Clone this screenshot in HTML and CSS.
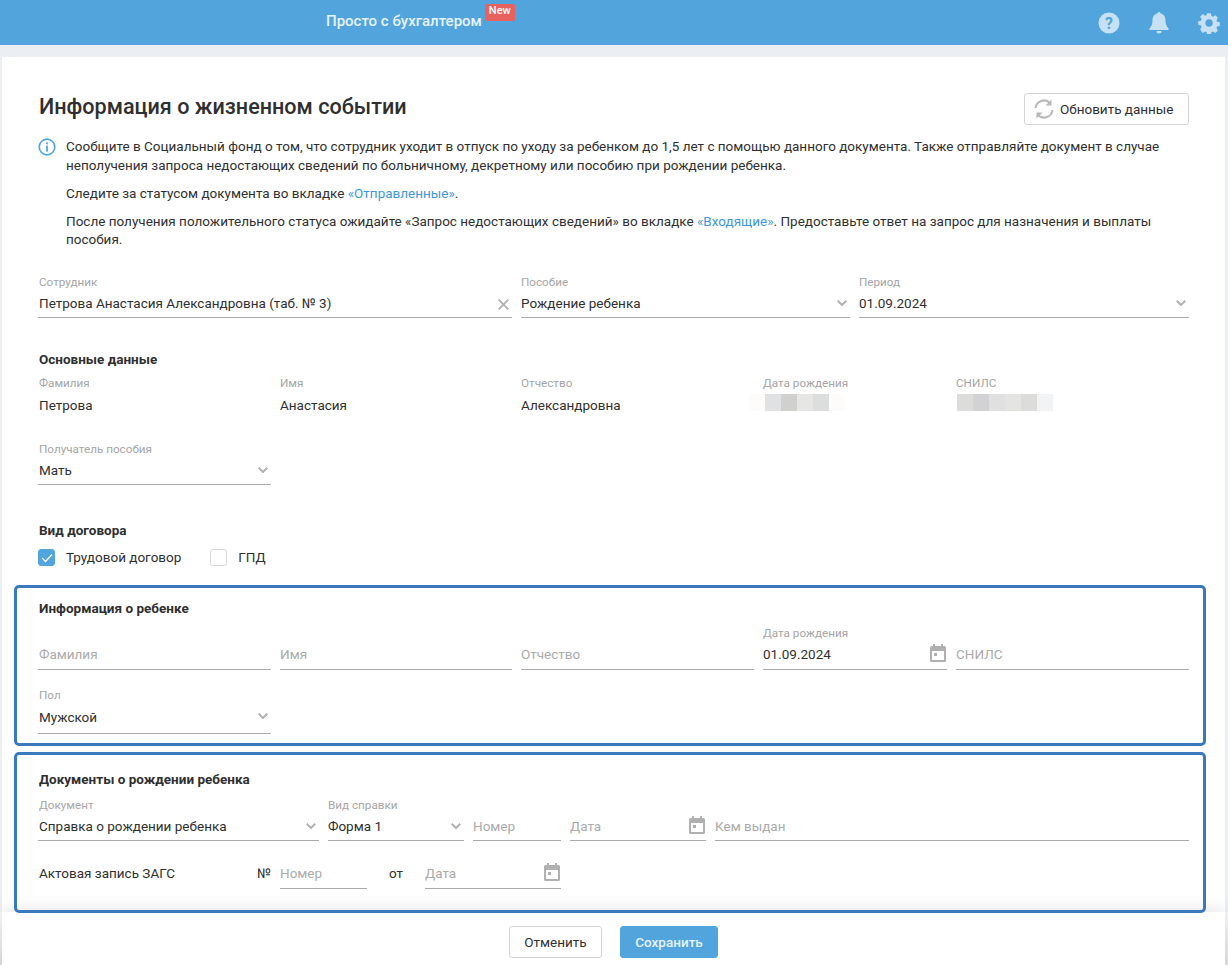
FILE: index.html
```html
<!DOCTYPE html>
<html lang="ru">
<head>
<meta charset="utf-8">
<title>Информация о жизненном событии</title>
<link rel="stylesheet" href="styles.css">
</head>
<body>
<svg class="defs" width="0" height="0" aria-hidden="true">
  <symbol id="cal" viewBox="0 0 16 18"><path fill="#b0b0b0" fill-rule="evenodd" d="M3 0h2v2h6V0h2v2h1.500A1.500 1.500 0 0 1 16 3.500v13a1.500 1.500 0 0 1-1.500 1.500h-13A1.500 1.500 0 0 1 0 16.500v-13A1.500 1.500 0 0 1 1.500 2H3zM2 7v9h12V7zM4 9h3v3H4z"/></symbol>
  <symbol id="chev" viewBox="0 0 10 6"><path fill="none" stroke="#b2b2b2" stroke-width="2" d="M.7.7 5 5l4.300-4.300"/></symbol>
</svg>
<header class="topbar">
  <div class="brand">Просто с бухгалтером<span class="badge">New</span></div>
  <div class="top-icons">
    <svg width="22" height="22" viewBox="0 0 22 22"><circle cx="11" cy="11" r="10.500" fill="#c6e1f5"/><text x="11" y="16.500" text-anchor="middle" class="q">?</text></svg>
    <svg width="20" height="22" viewBox="0 0 20 22"><path fill="#c6e1f5" d="M10 0a1.500 1.500 0 0 1 1.500 1.600C15 2.300 16.500 5 16.500 8.500c0 4 1 5.500 3 8V18H.5v-1.500c2-2.500 3-4 3-8C3.500 5 5 2.300 8.500 1.600A1.500 1.500 0 0 1 10 0zM7.500 19h5a2.500 2.500 0 0 1-5 0z"/></svg>
    <svg width="22" height="22" viewBox="0 0 22 22"><path fill="#c6e1f5" fill-rule="evenodd" d="M9 .5h4l.6 3 1.700.7 2.600-1.700 2.800 2.800-1.700 2.600.7 1.700 3 .6v4l-3 .6-.7 1.700 1.700 2.600-2.800 2.800-2.600-1.700-1.700.7-.6 3H9l-.6-3-1.700-.7-2.600 1.700L1.300 17.900 3 15.300l-.7-1.700-3-.6v-4l3-.6.7-1.700L1.300 4.100l2.800-2.800L6.700 3l1.700-.7zM11 7a4 4 0 1 0 0 8 4 4 0 0 0 0-8z" transform="translate(.9 .9) scale(.92)"/></svg>
  </div>
</header>
<main class="card">
  <div class="title-row">
    <h1>Информация о жизненном событии</h1>
    <button class="refresh">
      <svg width="20" height="20" viewBox="0 0 20 20"><g fill="none" stroke="#b8b8b8" stroke-width="2"><path d="M1.500 9A8.500 8.500 0 0 1 16 4"/><path d="M18.500 11A8.500 8.500 0 0 1 4 16"/></g><path fill="#b8b8b8" d="M17.500 .5v6h-6zM2.500 19.500v-6h6z"/></svg>
      Обновить данные
    </button>
  </div>
  <div class="info">
    <svg class="info-icon" width="18" height="18" viewBox="0 0 18 18"><circle cx="9" cy="9" r="7.800" fill="none" stroke="#52a5dc" stroke-width="1.700"/><rect x="8.100" y="7.600" width="1.800" height="6" fill="#52a5dc"/><rect x="8.100" y="4.400" width="1.800" height="1.900" fill="#52a5dc"/></svg>
    <div class="info-text">
      <p>Сообщите в Социальный фонд о том, что сотрудник уходит в отпуск по уходу за ребенком до 1,5 лет с помощью данного документа. Также отправляйте документ в случае неполучения запроса недостающих сведений по больничному, декретному или пособию при рождении ребенка.</p>
      <p>Следите за статусом документа во вкладке <a>«Отправленные»</a>.</p>
      <p>После получения положительного статуса ожидайте «Запрос недостающих сведений» во вкладке <a>«Входящие»</a>. Предоставьте ответ на запрос для назначения и выплаты пособия.</p>
    </div>
  </div>

  <div class="row first-row">
    <div class="field w474"><label>Сотрудник</label><div class="control">Петрова Анастасия Александровна (таб. № 3)<svg class="x" width="11" height="11" viewBox="0 0 11 11"><path stroke="#b0b0b0" stroke-width="1.700" d="M.7.7l9.600 9.600M10.300.7.7 10.300"/></svg></div></div>
    <div class="field w329"><label>Пособие</label><div class="control">Рождение ребенка<svg class="chev"><use href="#chev"/></svg></div></div>
    <div class="field w330"><label>Период</label><div class="control">01.09.2024<svg class="chev"><use href="#chev"/></svg></div></div>
  </div>

  <h2 class="sec main-sec">Основные данные</h2>
  <div class="row">
    <div class="field plain w233"><label>Фамилия</label><div class="control">Петрова</div></div>
    <div class="field plain w232"><label>Имя</label><div class="control">Анастасия</div></div>
    <div class="field plain w233"><label>Отчество</label><div class="control">Александровна</div></div>
    <div class="field plain w184"><label>Дата рождения</label>
      <div class="blur"><i class="c0"></i><i class="c1"></i><i class="c2"></i><i class="c3"></i><i class="c4"></i><i class="c0"></i></div></div>
    <div class="field plain w233"><label>СНИЛС</label>
      <div class="blur snils"><i class="c5"></i><i class="c6"></i><i class="c7"></i><i class="c8"></i><i class="c5"></i><i class="c9"></i></div></div>
  </div>
  <div class="row recv-row">
    <div class="field w233"><label>Получатель пособия</label><div class="control">Мать<svg class="chev"><use href="#chev"/></svg></div></div>
  </div>

  <h2 class="sec contract-sec">Вид договора</h2>
  <div class="checks">
    <span class="check"><span class="box on"><svg width="12" height="10" viewBox="0 0 12 10"><path fill="none" stroke="#fff" stroke-width="1.300" d="M1 5l3.500 3.500L11 1.500"/></svg></span>Трудовой договор</span>
    <span class="check"><span class="box"></span>ГПД</span>
  </div>

  <section class="hl child">
    <h2 class="sec">Информация о ребенке</h2>
    <div class="row child-row">
      <div class="field w233"><label class="ghost">&nbsp;</label><div class="control ph">Фамилия</div></div>
      <div class="field w232"><label class="ghost">&nbsp;</label><div class="control ph">Имя</div></div>
      <div class="field w233"><label class="ghost">&nbsp;</label><div class="control ph">Отчество</div></div>
      <div class="field w184"><label>Дата рождения</label><div class="control">01.09.2024<svg class="cal"><use href="#cal"/></svg></div></div>
      <div class="field w233"><label class="ghost">&nbsp;</label><div class="control ph">СНИЛС</div></div>
    </div>
    <div class="row gender-row">
      <div class="field w233"><label>Пол</label><div class="control">Мужской<svg class="chev"><use href="#chev"/></svg></div></div>
    </div>
  </section>

  <section class="hl docs">
    <h2 class="sec">Документы о рождении ребенка</h2>
    <div class="row">
      <div class="field w281"><label>Документ</label><div class="control">Справка о рождении ребенка<svg class="chev"><use href="#chev"/></svg></div></div>
      <div class="field w136"><label>Вид справки</label><div class="control">Форма 1<svg class="chev"><use href="#chev"/></svg></div></div>
      <div class="field w88"><label class="ghost">&nbsp;</label><div class="control ph">Номер</div></div>
      <div class="field w136"><label class="ghost">&nbsp;</label><div class="control ph">Дата<svg class="cal"><use href="#cal"/></svg></div></div>
      <div class="field w474b"><label class="ghost">&nbsp;</label><div class="control ph">Кем выдан</div></div>
    </div>
    <div class="act-row">
      <span class="act-label">Актовая запись ЗАГС</span>
      <span class="act-no">№</span>
      <div class="field w87"><div class="control ph">Номер</div></div>
      <span class="act-from">от</span>
      <div class="field w136"><div class="control ph">Дата<svg class="cal"><use href="#cal"/></svg></div></div>
    </div>
  </section>
</main>
<footer class="footer">
  <button class="btn">Отменить</button>
  <button class="btn primary">Сохранить</button>
</footer>
</body>
</html>
```
FILE: styles.css
```css
* { box-sizing: border-box; }
html, body { height: 965px; overflow: hidden; }
body { margin: 0; background: #ebeff3; font: 13.5px/19px Roboto, "Liberation Sans", sans-serif; color: #2f2f2f; position: relative; }
.defs { position: absolute; }
.topbar { height: 45px; background: #52a5dc; display: flex; align-items: center; position: relative; }
.brand { margin-left: 326px; color: #e6f3fc; font-size: 15px; font-weight: 500; line-height: 19px; display: flex; margin-top: -3px; }
.badge { background: #e9615f; color: #fff; font-size: 11px; font-weight: 500; line-height: 14px; height: 17px; padding: 0 4px; border-radius: 2px; margin: -8px 0 0 3px; }
.top-icons { margin-left: auto; display: flex; align-items: center; margin-right: 8px; gap: 29px; }
.q { font: 700 16px Roboto, sans-serif; fill: #52a5dc; }
.card { position: absolute; left: 2px; top: 57px; width: 1223px; height: 908px; background: #fff; padding: 36px 36px 0; }
.title-row { display: flex; justify-content: space-between; height: 32px; }
h1 { margin: 0 0 0 1px; font-size: 21.6px; font-weight: 500; line-height: 28px; color: #2f2f2f; }
.refresh { width: 165px; height: 32px; background: #fff; border: 1px solid #d4d4d4; border-radius: 3px; font: 13.5px Roboto, sans-serif; color: #2f2f2f; display: flex; align-items: center; gap: 6px; padding: 0 0 0 9px; }
.info { display: flex; margin-top: 12px; gap: 10px; }
.info-icon { flex: none; margin-top: 1px; }
.info-text { width: 1125px; line-height: 18.5px; }
.info-text p { margin: 0 0 9.5px; }
.info-text p:last-child { margin-bottom: 0; }
a { color: #3f97d6; }
.row { display: flex; gap: 9px; }
.first-row { margin-top: 27.25px; }
.field { display: block; flex: none; }
.field label { display: block; font-size: 11.7px; line-height: 12px; color: #a5a5a5; height: 14px; }
.row .field:first-child label, .row .field:first-child .control { padding-left: 1px; }
.control { height: 28px; padding-top: 4px; border-bottom: 1px solid #aaa; position: relative; line-height: 19px; }
.plain .control { border-bottom: 0; padding-top: 5px; }
.ph { color: #aaa; }
.chev { position: absolute; right: 3px; top: 10px; width: 10px; height: 6px; }
.x { position: absolute; right: 3px; top: 9px; }
.cal { position: absolute; right: 1px; top: 3px; width: 16px; height: 18px; }
.w474 { width: 474px; } .w329 { width: 329px; } .w330 { width: 330px; }
.w233 { width: 233px; } .w232 { width: 232px; } .w184 { width: 184px; }
.w281 { width: 281px; } .w136 { width: 136px; } .w88 { width: 88px; } .w87 { width: 87px; } .w474b { width: 474px; }
.sec { margin: 0; padding-left: 1px; font-size: 13.5px; font-weight: 700; line-height: 18px; }
.main-sec { margin-top: 32px; margin-bottom: 9px; }
.blur { display: flex; margin: 3px 0 0 -14px; height: 18px; }
.blur i { width: 16px; height: 17px; display: block; }
.snils { margin-left: 1px; }
.c0 { background: #fdfcfb; } .c1 { background: #dfe1e3; } .c2 { background: #d0d1cf; } .c3 { background: #e6e6e4; } .c4 { background: #dcdedd; }
.c5 { background: #dcdcda; } .c6 { background: #d2d2d4; } .c7 { background: #e0e0e0; } .c8 { background: #e4e4e2; } .c9 { background: #f2f3f5; }
.recv-row { margin-top: 24px; }
.contract-sec { margin-top: 36px; }
.checks { display: flex; margin-top: 10px; height: 18px; align-items: center; gap: 29px; }
.check { display: flex; align-items: center; gap: 11px; }
.box { width: 17px; height: 17px; border: 1px solid #d8d8d8; border-radius: 3px; display: flex; align-items: center; justify-content: center; }
.box.on { background: #52a5dc; border-color: #52a5dc; }
.hl { position: relative; z-index: 2; margin-left: -24px; width: 1192px; padding: 11px 21px 0; border: 3px solid #3b79bf; border-radius: 5px; }
.child { margin-top: 18px; height: 161px; }
.docs { margin-top: 6px; height: 161px; padding-top: 10px; }
.child-row { margin-top: 10px; }
.child-row .control { height: 29px; }
.gender-row { margin-top: 19px; }
.gender-row .control { height: 31px; padding-top: 5.5px; }
.docs .sec { margin-top: 5px; margin-bottom: 11px; }
.act-row { display: flex; align-items: flex-start; margin-top: 20px; }
.act-row .control { padding-top: 3px; }
.act-row .cal { top: 2px; }
.act-row span { padding-top: 3px; }
.act-label { width: 219px; padding-left: 1px; }
.act-no { width: 23px; }
.act-from { width: 58px; text-align: center; }
.footer { position: absolute; z-index: 1; left: 2px; width: 1223px; top: 912px; bottom: 0; background: #fff; box-shadow: 0 -4px 14px rgba(0,0,0,.09); display: flex; justify-content: center; align-items: flex-start; padding: 14px 0 0; gap: 18px; }
.footer::before, .footer::after { content: ""; position: absolute; top: 0; bottom: 0; background: linear-gradient(#f0f1f2, #d6d6d6); }
.footer::before { left: -2px; width: 2px; }
.footer::after { right: -3px; width: 3px; }
.btn { height: 32px; width: 93px; border: 1px solid #d4d4d4; border-radius: 3px; background: #fff; font: 13.5px Roboto, sans-serif; color: #2f2f2f; padding: 0; }
.btn.primary { width: 98px; background: #52a5dc; border-color: #52a5dc; color: #e6f3fc; font-weight: 500; }
```
